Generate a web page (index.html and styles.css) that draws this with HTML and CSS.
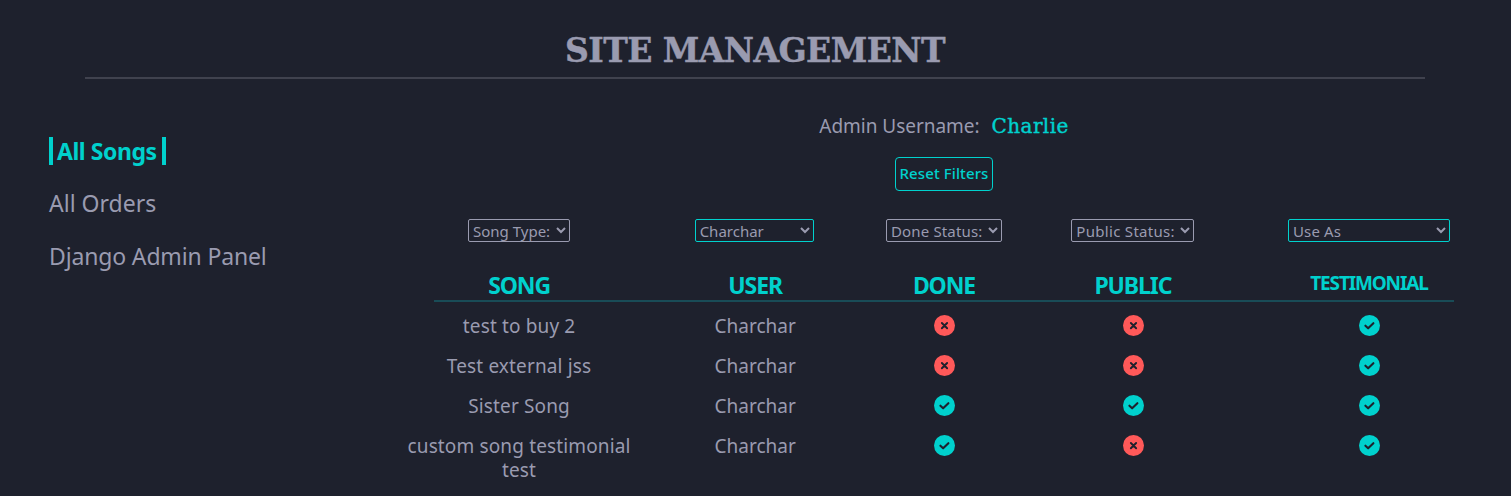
FILE: index.html
```html
<!DOCTYPE html>
<html lang="en">
<head>
<meta charset="utf-8">
<title>Site Management</title>
<link rel="stylesheet" href="styles.css">
</head>
<body>
<svg class="sprite" aria-hidden="true">
  <symbol id="yes" viewBox="0 0 20 20"><circle cx="10" cy="10" r="10" fill="#00d1cd"/><path d="M6.1 10.2l2.6 2.5 5-4.9" fill="none" stroke="#1e212d" stroke-width="2" stroke-linecap="round" stroke-linejoin="round"/></symbol>
  <symbol id="no" viewBox="0 0 20 20"><circle cx="10" cy="10" r="10" fill="#ff5959"/><path d="M7.5 7.6l5 5m0-5l-5 5" fill="none" stroke="#1e212d" stroke-width="1.8" stroke-linecap="round"/></symbol>
</svg>
<header class="title"><h1>SITE MANAGEMENT</h1></header>
<div class="layout">
  <nav class="menu">
    <a class="active">All Songs</a>
    <a>All Orders</a>
    <a class="panel">Django Admin Panel</a>
  </nav>
  <main>
    <div class="admin"><span class="admin-label">Admin Username:</span><span class="admin-name">Charlie</span></div>
    <button class="reset">Reset Filters</button>
    <div class="grid filters">
      <div><select class="f-song"><option>Song Type:</option></select></div>
      <div><select class="f-user on"><option>Charchar</option></select></div>
      <div><select class="f-done"><option>Done Status:</option></select></div>
      <div><select class="f-public"><option>Public Status:</option></select></div>
      <div><select class="f-use on"><option>Use As</option></select></div>
    </div>
    <div class="heads-wrap"><div class="grid heads">
      <div>SONG</div><div>USER</div><div>DONE</div><div>PUBLIC</div><div class="small">TESTIMONIAL</div>
    </div></div>
    <div class="grid row"><div class="song">test to buy 2</div><div>Charchar</div><svg><use href="#no"/></svg><svg><use href="#no"/></svg><svg><use href="#yes"/></svg></div>
    <div class="grid row"><div class="song">Test external jss</div><div>Charchar</div><svg><use href="#no"/></svg><svg><use href="#no"/></svg><svg><use href="#yes"/></svg></div>
    <div class="grid row"><div class="song">Sister Song</div><div>Charchar</div><svg><use href="#yes"/></svg><svg><use href="#yes"/></svg><svg><use href="#yes"/></svg></div>
    <div class="grid row"><div class="song">custom song testimonial<br>test</div><div>Charchar</div><svg><use href="#yes"/></svg><svg><use href="#no"/></svg><svg><use href="#yes"/></svg></div>
  </main>
</div>
</body>
</html>
```
FILE: styles.css
```css
* { box-sizing: border-box; }
body { margin: 0; height: 496px; overflow: hidden; background: #1e212d; color: #9a9bb0; font-family: "Noto Sans", sans-serif; }
.sprite { display: none; }
.title { margin: 0 86px 0 85px; height: 79px; padding-top: 29px; border-bottom: 2px solid #40424e; text-align: center; }
h1 { margin: 0; font: bold 33px/44px "DejaVu Serif", serif; letter-spacing: -0.55px; white-space: nowrap; -webkit-text-stroke: 0.5px #9a9bb0; }
.layout { display: flex; }
.menu { width: 401px; padding: 57px 0 0 49px; display: flex; flex-direction: column; align-items: flex-start; gap: 25px; font-size: 23px; line-height: 28px; white-space: nowrap; }
.panel { letter-spacing: -0.15px; }
.active { color: #00d1cd; border: solid #00d1cd; border-width: 0 4px; padding: 0 4px; width: 117px; margin-top: 1px; margin-bottom: -1px; font-weight: 700; letter-spacing: -0.45px; }
main { width: 1086px; display: flex; flex-direction: column; align-items: center; }
.admin { display: flex; align-items: center; justify-content: center; gap: 12px; height: 28px; margin-top: 33px; line-height: 28px; font-size: 19px; white-space: nowrap; }
.admin-label { letter-spacing: -0.03px; }
.admin-name { color: #00d1cd; font: 20px/28px "DejaVu Serif", serif; letter-spacing: 0.4px; -webkit-text-stroke: 0.4px #00d1cd; }
.reset { width: 98px; height: 34px; margin-top: 17px; padding: 0 0 2px; border: 1px solid #00d1cd; border-radius: 4px; background: none; color: #00d1cd; font: 500 15px/24px "Noto Sans", sans-serif; letter-spacing: 0.1px; white-space: nowrap; }
.grid { display: grid; grid-template-columns: 5fr 5fr 3fr 5fr 5fr; width: 1086px; justify-items: center; text-align: center; }
.filters { margin-top: 28px; height: 23px; }
.filters > div { display: flex; }
select { height: 23px; padding: 0; border: 1px solid #9a9bb0; border-radius: 2px; background: transparent; color: #9a9bb0; font: 15px/21px "Noto Sans", sans-serif; }
select.on { border-color: #00d1cd; }
.f-song { width: 102px; }
.f-user { width: 119px; margin-right: 2px; }
.f-done { width: 116px; letter-spacing: 0.15px; }
.f-public { width: 123px; letter-spacing: 0.3px; }
.f-use { width: 162px; letter-spacing: 0.15px; }
.heads-wrap { width: 1020px; height: 32px; margin-top: 28px; border-bottom: 2px solid #194c57; display: flex; justify-content: center; }
.heads { flex: none; color: #00d1cd; font-size: 23px; line-height: 30px; font-weight: 700; letter-spacing: -1.1px; }
.heads .small { font-size: 19px; line-height: 27px; letter-spacing: -1.15px; }
.row { margin-top: 12px; min-height: 28px; font-size: 19px; line-height: 24px; white-space: nowrap; }
.song { letter-spacing: 0.14px; }
.row svg { width: 21px; height: 21px; margin: 1px 0 0 1px; }
```
